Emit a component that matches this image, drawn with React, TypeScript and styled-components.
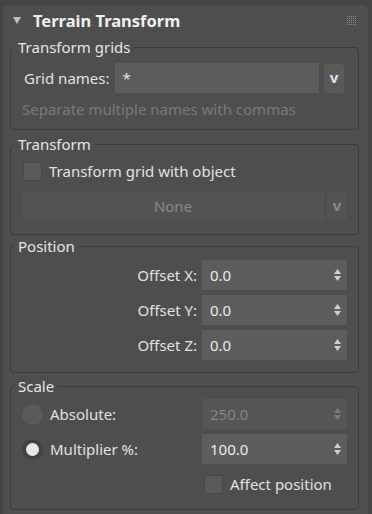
import React from "react";
import styled, { createGlobalStyle } from "styled-components";

const GlobalStyle = createGlobalStyle`
  html, body {
    margin: 0;
    background: #444444;
    font-family: "Noto Sans", "Open Sans", sans-serif;
    font-size: 15px;
    line-height: 20px;
    color: #e2e2e2;
  }
`;

// Rollout panel
const Panel = styled.div`
  margin: 5px 4px 0 3px;
  background: #4e4e4e;
  border-radius: 5px 5px 0 0;
  min-height: 509px;
  padding: 0 9px 3px 7px;
  box-sizing: border-box;
  display: flex;
  flex-direction: column;
  gap: 4px;
`;

const Header = styled.div`
  height: 29px;
  display: flex;
  align-items: center;
  padding: 2px 3px 0 3px;
  box-sizing: border-box;
`;

const Title = styled.div`
  flex: 1;
  margin-left: 12px;
  font-weight: 700;
  font-size: 16.5px;
  color: #f0f0f0;
`;

const Group = styled.fieldset<{ $pt: number; $pb: number }>`
  margin: 0;
  border: 1px solid #3a3a3a;
  border-radius: 4px;
  padding: ${(p) => p.$pt}px 11px ${(p) => p.$pb}px 11px;
  min-width: 0;
  display: flex;
  flex-direction: column;
  gap: 5px;
`;

const Legend = styled.legend`
  padding: 0 4px;
  margin-left: -8px;
  line-height: 18px;
  color: #e6e6e6;
`;

const Row = styled.div<{ $end?: boolean }>`
  display: flex;
  align-items: center;
  gap: 5px;
  justify-content: ${(p) => (p.$end ? "flex-end" : "flex-start")};
`;

const Label = styled.span`
  white-space: nowrap;
`;

const TextInput = styled.div`
  flex: 1;
  height: 30px;
  background: #5d5d5d;
  display: flex;
  align-items: center;
  padding: 0 8px;
  box-sizing: border-box;
`;

const DropButton = styled.div<{ $disabled?: boolean }>`
  width: 20px;
  height: 29px;
  border-radius: 4px;
  background: ${(p) => (p.$disabled ? "#535353" : "#5a5a5a")};
  color: ${(p) => (p.$disabled ? "#8a8a8a" : "#dde4f0")};
  font-weight: 700;
  display: flex;
  align-items: center;
  justify-content: center;
  padding-bottom: 2px;
  box-sizing: border-box;
  flex: none;
`;

const Hint = styled.div`
  color: #7a7a7a;
  margin-top: 1px;
`;

const WideButton = styled.div`
  flex: 1;
  height: 30px;
  border-radius: 4px;
  background: #535353;
  color: #8a8a8a;
  display: flex;
  align-items: center;
  justify-content: center;
`;

const CheckBox = styled.div`
  width: 19px;
  height: 19px;
  background: #5a5a5a;
  border: 1px solid #474747;
  box-sizing: border-box;
  flex: none;
`;

const CheckRow = styled.div<{ $indent: number }>`
  display: flex;
  align-items: center;
  gap: 7px;
  height: 20px;
  padding-left: ${(p) => p.$indent}px;
`;

const Spinner = styled.div<{ $disabled?: boolean }>`
  width: 145px;
  height: 30px;
  background: ${(p) => (p.$disabled ? "#565656" : "#5d5d5d")};
  color: ${(p) => (p.$disabled ? "#858585" : "#ececec")};
  display: flex;
  align-items: center;
  justify-content: space-between;
  padding: 0 6px 0 8px;
  box-sizing: border-box;
  flex: none;
`;

const Radio = styled.div<{ $on?: boolean }>`
  width: 21px;
  height: 21px;
  border-radius: 50%;
  background: ${(p) => (p.$on ? "#424242" : "#5a5a5a")};
  display: flex;
  align-items: center;
  justify-content: center;
  flex: none;
  &::after {
    content: "";
    width: 13px;
    height: 13px;
    border-radius: 50%;
    background: ${(p) => (p.$on ? "#e8e8e8" : "transparent")};
  }
`;

const RadioLabel = styled.div`
  flex: 1;
  display: flex;
  align-items: center;
  gap: 7px;
`;

function Arrows({ disabled }: { disabled?: boolean }) {
  const c = disabled ? "#7d7d7d" : "#d0d0d0";
  return (
    <svg width="7" height="12" viewBox="0 0 7 12">
      <polygon points="0,5 3.5,0 7,5" fill={c} />
      <polygon points="0,7 7,7 3.5,12" fill={c} />
    </svg>
  );
}

function Grip() {
  const dots = [];
  for (let r = 0; r < 5; r++)
    for (let c = 0; c < 5; c++) dots.push(<rect key={r + "-" + c} x={c * 2} y={r * 2} width="1" height="1" fill="#8c8c8c" />);
  return (
    <svg width="9" height="9" viewBox="0 0 9 9">
      {dots}
    </svg>
  );
}

export default function App() {
  return (
    <>
      <GlobalStyle />
      <Panel>
        <Header>
          <svg width="8" height="7" viewBox="0 0 8 7">
            <polygon points="0,0 8,0 4,7" fill="#bdbdbd" />
          </svg>
          <Title>Terrain Transform</Title>
          <Grip />
        </Header>

        <Group $pt={7} $pb={10}>
          <Legend>Transform grids</Legend>
          <Row style={{ paddingRight: 3 }}>
            <Label style={{ paddingLeft: 2 }}>Grid names:</Label>
            <TextInput>*</TextInput>
            <DropButton>v</DropButton>
          </Row>
          <Hint>Separate multiple names with commas</Hint>
        </Group>

        <Group $pt={8} $pb={13} style={{ marginTop: 1 }}>
          <Legend>Transform</Legend>
          <CheckRow $indent={1}>
            <CheckBox />
            <span>Transform grid with object</span>
          </CheckRow>
          <Row style={{ gap: 3, marginTop: 5 }}>
            <WideButton>None</WideButton>
            <DropButton $disabled>v</DropButton>
          </Row>
        </Group>

        <Group $pt={5} $pb={12} style={{ marginTop: -2 }}>
          <Legend>Position</Legend>
          {["X", "Y", "Z"].map((a) => (
            <Row $end key={a}>
              <Label>Offset {a}:</Label>
              <Spinner>
                <span>0.0</span>
                <Arrows />
              </Spinner>
            </Row>
          ))}
        </Group>

        <Group $pt={4} $pb={15}>
          <Legend>Scale</Legend>
          <Row>
            <RadioLabel>
              <Radio />
              <span>Absolute:</span>
            </RadioLabel>
            <Spinner $disabled>
              <span>250.0</span>
              <Arrows disabled />
            </Spinner>
          </Row>
          <Row>
            <RadioLabel>
              <Radio $on />
              <span>Multiplier %:</span>
            </RadioLabel>
            <Spinner>
              <span>100.0</span>
              <Arrows />
            </Spinner>
          </Row>
          <CheckRow $indent={182} style={{ marginTop: 5 }}>
            <CheckBox />
            <span>Affect position</span>
          </CheckRow>
        </Group>
      </Panel>
    </>
  );
}
